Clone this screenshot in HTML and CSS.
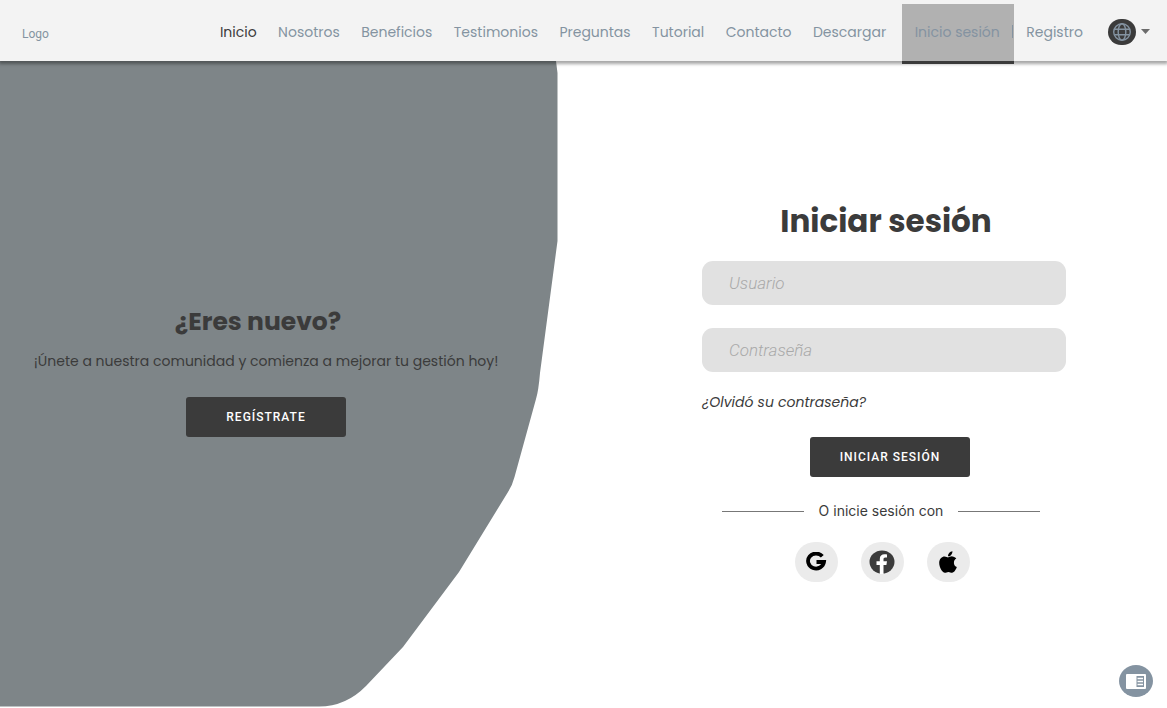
FILE: index.html
```html
<!DOCTYPE html>
<html lang="es">
<head>
<meta charset="utf-8">
<meta name="viewport" content="width=device-width, initial-scale=1">
<title>Iniciar sesión</title>
<link rel="stylesheet" href="styles.css">
</head>
<body>
<header class="topbar">
  <a class="logo" href="#">Logo</a>
  <nav class="nav" aria-label="Principal">
    <ul class="nav-list">
      <li><a class="nav-link nav-link-current" href="#">Inicio</a></li>
      <li><a class="nav-link" href="#">Nosotros</a></li>
      <li><a class="nav-link" href="#">Beneficios</a></li>
      <li><a class="nav-link" href="#">Testimonios</a></li>
      <li><a class="nav-link" href="#">Preguntas</a></li>
      <li><a class="nav-link" href="#">Tutorial</a></li>
      <li><a class="nav-link" href="#">Contacto</a></li>
      <li><a class="nav-link" href="#">Descargar</a></li>
      <li class="nav-active"><a class="nav-link" href="#">Inicio sesión</a><span class="nav-separator"></span></li>
      <li><a class="nav-link" href="#">Registro</a></li>
    </ul>
  </nav>
  <button class="language" type="button" aria-label="Idioma">
    <svg width="28" height="26" viewBox="0 0 28 26" aria-hidden="true">
      <rect width="28" height="26" rx="13" fill="#3b3b3b"/>
      <g fill="none" stroke="#8493a1" stroke-width="1.4">
        <circle cx="14" cy="13" r="8.3"/>
        <ellipse cx="14" cy="13" rx="3.8" ry="8.3"/>
        <path d="M6.4 10.2h15.2M6.4 15.8h15.2"/>
      </g>
    </svg>
    <svg width="9" height="5" viewBox="0 0 9 5" aria-hidden="true"><path d="M0 0h9L4.500 5z" fill="#6b6b6b"/></svg>
  </button>
</header>

<main class="page">
  <section class="welcome">
    <svg class="welcome-shape" viewBox="0 0 558 647" preserveAspectRatio="none" aria-hidden="true">
      <path d="M0 0H556L557.500 12V180L540 312Q538.500 330 536 338L514.500 416Q512.500 424 508 431L459 511L403 586L366 625Q346 645.500 319 645.500H0Z" fill="#7e8588"/>
    </svg>
    <h2 class="welcome-title">¿Eres nuevo?</h2>
    <p class="welcome-text">¡Únete a nuestra comunidad y comienza a mejorar tu gestión hoy!</p>
    <button class="button" type="button">REGÍSTRATE</button>
  </section>

  <section class="login">
    <form class="form">
      <h1 class="form-title">Iniciar sesión</h1>
      <input class="field" type="text" placeholder="Usuario" aria-label="Usuario">
      <input class="field" type="password" placeholder="Contraseña" aria-label="Contraseña">
      <a class="forgot" href="#">¿Olvidó su contraseña?</a>
      <div class="submit"><button class="button" type="submit">INICIAR SESIÓN</button></div>
      <div class="divider">O inicie sesión con</div>
      <div class="socials">
        <button class="social" type="button" aria-label="Google">
          <svg width="22" height="20" viewBox="0 0 22 20" aria-hidden="true"><path d="M17.300 4.300A8 7.500 0 1 0 19 10H11.500" fill="none" stroke="#000" stroke-width="3.800"/></svg>
        </button>
        <button class="social" type="button" aria-label="Facebook">
          <svg width="26" height="24" viewBox="0 0 26 24" aria-hidden="true"><ellipse cx="13" cy="12" rx="12.500" ry="11.500" fill="#3b3b3b"/><path d="M10.800 24V14.900H7.500V11.200H10.800V9C10.800 5.800 12.800 4.300 15.500 4.300C16.800 4.300 18 4.500 18 4.500V7.600H16.400C14.900 7.600 14.500 8.500 14.500 9.400V11.200H18L17.400 14.900H14.500V24Z" fill="#fff"/></svg>
        </button>
        <button class="social" type="button" aria-label="Apple">
          <svg width="18" height="22" viewBox="0 28 384 455" preserveAspectRatio="none" aria-hidden="true"><path d="M318.700 268.700c-.2-36.700 16.400-64.400 50-84.800-18.800-26.900-47.200-41.700-84.700-44.600-35.500-2.800-74.300 20.700-88.500 20.700-15 0-49.400-19.700-76.400-19.700C63.300 141.200 4 184.800 4 273.500q0 39.300 14.400 81.200c12.800 36.700 59 126.700 107.200 125.200 25.200-.6 43-17.900 75.800-17.900 31.800 0 48.300 17.900 76.400 17.900 48.600-.7 90.400-82.500 102.600-119.300-65.200-30.700-61.700-90-61.700-91.900zm-56.600-164.200c27.300-32.400 24.800-61.900 24-72.500-24.100 1.400-52 16.400-67.900 34.900-17.500 19.800-27.800 44.300-25.600 71.900 26.100 2 49.900-11.400 69.500-34.300z"/></svg>
        </button>
      </div>
    </form>
  </section>
</main>

<button class="reader" type="button" aria-label="Vista de lectura">
  <svg width="20" height="15" viewBox="0 0 20 15" aria-hidden="true">
    <rect width="20" height="15" rx="1" fill="#fff"/>
    <path d="M10.500 2H18V13H10.500Z" fill="#8493a1"/>
    <path d="M11.500 4.500H17M11.500 7.500H17M11.500 10.500H17" stroke="#fff" stroke-width="1.400"/>
  </svg>
</button>
</body>
</html>
```
FILE: styles.css
```css
* { box-sizing: border-box; }

body {
  margin: 0;
  min-height: 100vh;
  display: flex;
  flex-direction: column;
  background: #fff;
  color: #3b3b3b;
  font-family: Poppins, Inter, sans-serif;
}

h1, h2, p, ul { margin: 0; padding: 0; }
a { color: inherit; text-decoration: none; }
button { border: 0; padding: 0; cursor: pointer; }

.topbar {
  position: relative;
  z-index: 1;
  display: flex;
  align-items: stretch;
  height: 61px;
  padding: 0 17px 0 22px;
  background: #f3f3f3;
  box-shadow: 0 2px 3px 1px rgba(0, 0, 0, 0.35);
}

.logo {
  align-self: center;
  padding-top: 6px;
  color: #8493a1;
  font: 12px/16px Roboto, sans-serif;
}

.nav { flex: 1; margin-left: 171px; }

.nav-list {
  display: flex;
  justify-content: space-between;
  height: 100%;
  list-style: none;
}

.nav-list li { display: flex; align-items: center; padding-top: 2px; }
.nav-link { color: #8493a1; font-size: 14px; line-height: 20px; white-space: nowrap; }
.nav-link-current { color: #3b3b3b; }

.nav-list .nav-active {
  gap: 12px;
  margin: 4px -9px -3px -6px;
  padding: 0 1px 2px 13px;
  background: #b1b1b1;
  border-bottom: 3px solid #3b3b3b;
}

.nav-separator { width: 1px; height: 13px; background: #8493a1; }

.language {
  display: flex;
  align-items: center;
  gap: 5px;
  margin-left: 25px;
  padding-top: 2px;
  background: none;
}

.page {
  flex: 1;
  display: grid;
  grid-template-columns: 558fr 609fr;
}

.welcome {
  position: relative;
  display: flex;
  flex-direction: column;
  align-items: center;
  justify-content: center;
  padding: 0 26px 29px 0;
}

.welcome > * { position: relative; }

.welcome .welcome-shape {
  position: absolute;
  inset: 0;
  width: 100%;
  height: 100%;
}

.welcome-title { padding-right: 16px; font-size: 25px; line-height: 36px; }
.welcome-text { margin: 9px 0 24px; font-size: 14px; line-height: 24px; }

.button {
  width: 160px;
  height: 40px;
  border-radius: 3px;
  background: #3b3b3b;
  color: #fff;
  font: 500 12px/16px Roboto, sans-serif;
  letter-spacing: 1px;
}

.login {
  display: flex;
  align-items: center;
  justify-content: center;
  padding: 9px 0 0 43px;
}

.form { display: flex; flex-direction: column; width: 364px; }
.form-title { margin-bottom: 16px; padding-left: 4px; font-size: 31px; line-height: 48px; text-align: center; }

.field {
  height: 44px;
  margin-bottom: 23px;
  padding: 0 27px;
  border: 0;
  border-radius: 11px;
  background: #e1e1e1;
  color: #3b3b3b;
  font: italic 300 17px/20px Roboto, sans-serif;
}

.field::placeholder { color: #a9a9a9; opacity: 1; }

.forgot { align-self: flex-start; margin-top: -3px; font-size: 14px; font-style: italic; line-height: 20px; }
.submit { display: flex; justify-content: center; margin: 25px 0 24px; padding-left: 12px; }

.divider {
  display: flex;
  align-items: center;
  gap: 15px;
  padding: 0 26px 0 20px;
  font: 14px/20px Inter, sans-serif;
}

.divider::before,
.divider::after { content: ""; flex: 1; height: 1px; margin-top: 2px; background: #777; }

.socials { display: flex; justify-content: center; gap: 23px; margin-top: 21px; padding-right: 4px; }

.social {
  display: flex;
  align-items: center;
  justify-content: center;
  width: 43px;
  height: 40px;
  border-radius: 20px;
  background: #ebebeb;
}

.reader {
  position: fixed;
  right: 14px;
  bottom: 11px;
  display: flex;
  align-items: center;
  justify-content: center;
  width: 34px;
  height: 32px;
  border-radius: 50%;
  background: #8493a1;
}
```
